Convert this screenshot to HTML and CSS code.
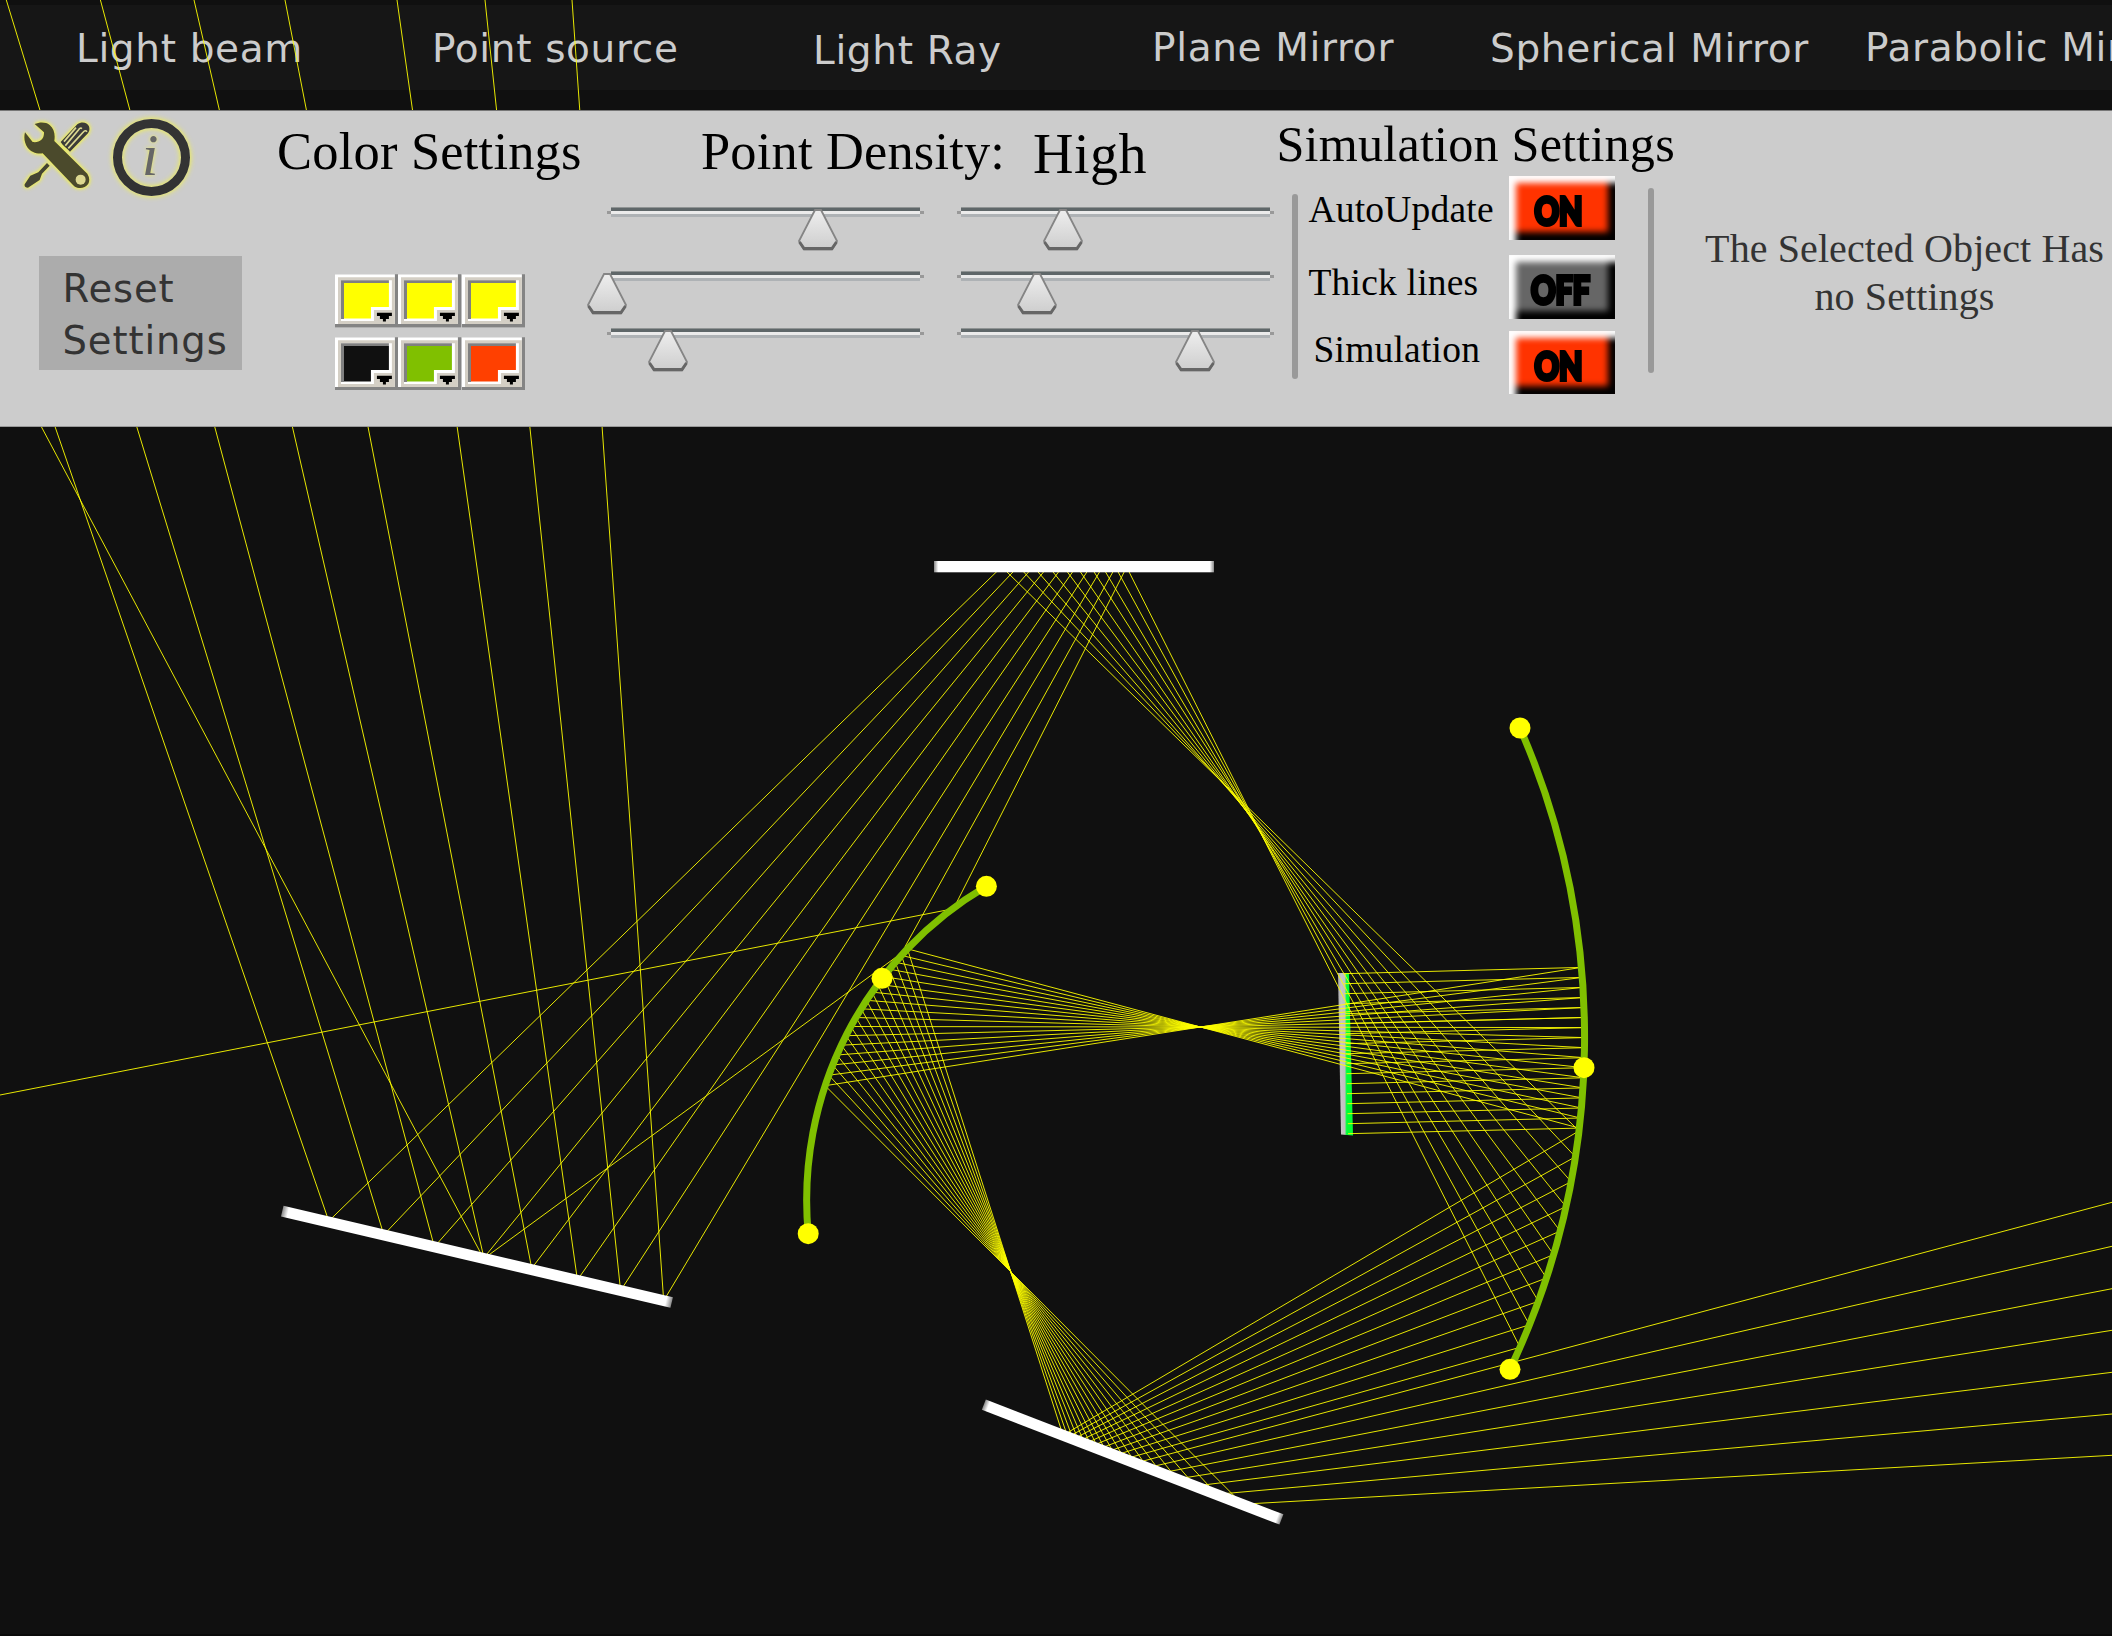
FILE: index.html
```html
<!DOCTYPE html>
<html lang="en">
<head>
<meta charset="utf-8">
<title>Optics simulation</title>
<link rel="stylesheet" href="styles.css">
</head>
<body>
<svg class="defs" width="0" height="0" aria-hidden="true">
  <defs>
    <linearGradient id="thumbFill" x1="0" y1="0" x2="0" y2="1"><stop offset="0" stop-color="#eee"/><stop offset="1" stop-color="#cdcdcd"/></linearGradient>
    <linearGradient id="emitterFill" x1="0" y1="0" x2="1" y2="0"><stop offset="0" stop-color="#aaa"/><stop offset=".2" stop-color="#c6c6c6"/><stop offset=".45" stop-color="#c0c0c0"/><stop offset=".58" stop-color="#00ff33"/><stop offset="1" stop-color="#00ff33"/></linearGradient>
    <linearGradient id="mirrorFill" x1="0" y1="0" x2="1" y2="0"><stop offset="0" stop-color="#888"/><stop offset=".015" stop-color="#fff"/><stop offset=".985" stop-color="#fff"/><stop offset="1" stop-color="#888"/></linearGradient>
    <symbol id="swatch" viewBox="0 0 63.5 53.5">
      <path fill="#848484" d="M0 0h63.5v53.5H0z"/>
      <path fill="#fff" d="M0 0h60v50H0z"/>
      <path fill="#d4cfc5" d="M3 3h57v47H3z"/>
      <path fill="#fff" d="M6 6h51v30H39v11H6z"/>
      <path fill="#808080" d="M6 6h48v3H9v36H6z"/>
      <path fill="currentColor" d="M9 9h45v24H36v11.500H9z"/>
      <path fill="#000" d="M42 38.700h15V42h-3v3h-3v2.500h-3V45h-3v-3h-3z"/>
    </symbol>
    <symbol id="thumb" viewBox="0 0 42 42">
      <path fill="url(#thumbFill)" stroke="#858585" stroke-width="1.800" d="M18 1h6l16 31-5 8.500H7L2 32z"/>
      <path fill="none" stroke="#666" stroke-width="3" d="M2.500 33L7 39.500h28l4.500-6.500"/>
    </symbol>
  </defs>
</svg>
<div class="app">
  <nav class="objects">
    <span class="o1">Light beam</span><span class="o2">Point source</span><span class="o3">Light Ray</span><span class="o4">Plane Mirror</span><span class="o5">Spherical Mirror</span><span class="o6">Parabolic Mirror</span>
  </nav>

  <section class="panel">
    <div class="tools">
      <div class="icons">
        <svg class="wrench" viewBox="60 55 220 220">
          <g fill="#4b4a2c">
            <path d="M182 127L232 74C245 64 262 68 267 80Q271 93 264 101L210 156L203 149L196 143L188 135Z" fill="#3b3b38"/>
            <path d="M196 138L236 90Q241 83 246 87M205 146L250 97Q256 90 261 96M192 126L228 84" stroke="#dcd890" stroke-width="5" fill="none"/>
            <path d="M141 190L149 198L126 222L119 241L84 264Q72 264 74 254L91 228L115 218Z" fill="#444433"/>
            <path d="M104 73C118 67 137 66 149 76C163 88 166 105 163 124L262 222Q272 238 265 252Q252 269 232 264Q224 262 219 256L128 161C111 164 93 157 83 144C73 130 71 113 75 98L98 127C118 130 133 119 132 98Z"/>
          </g>
          <circle cx="242" cy="240" r="15" fill="#dcd890"/>
        </svg>
        <div class="info">i</div>
      </div>
      <button class="reset">Reset<br>Settings</button>
    </div>

    <div class="colors">
      <h2>Color Settings</h2>
      <div class="swatches">
        <svg class="yellow"><use href="#swatch"/></svg><svg class="yellow"><use href="#swatch"/></svg><svg class="yellow"><use href="#swatch"/></svg>
        <svg class="black"><use href="#swatch"/></svg><svg class="green"><use href="#swatch"/></svg><svg class="orange"><use href="#swatch"/></svg>
      </div>
    </div>

    <div class="density">
      <div class="heading"><h2>Point Density:</h2><strong>High</strong></div>
      <div class="sliders">
        <div class="slider"><svg style="left:66.600%"><use href="#thumb"/></svg></div>
        <div class="slider"><svg style="left:33.300%"><use href="#thumb"/></svg></div>
        <div class="slider"><svg style="left:0%"><use href="#thumb"/></svg></div>
        <div class="slider"><svg style="left:25.100%"><use href="#thumb"/></svg></div>
        <div class="slider"><svg style="left:19.200%"><use href="#thumb"/></svg></div>
        <div class="slider"><svg style="left:75.100%"><use href="#thumb"/></svg></div>
      </div>
    </div>

    <div class="simulation">
      <h2>Simulation Settings</h2>
      <div class="switches">
        <div class="labels"><span>AutoUpdate</span><span>Thick lines</span><span>Simulation</span></div>
        <div class="toggles"><button class="on"><span>ON</span></button><button class="off"><span>OFF</span></button><button class="on"><span>ON</span></button></div>
      </div>
    </div>

    <div class="object">The Selected Object Has<br>no Settings</div>
  </section>

  <svg class="scene" viewBox="0 0 2112 1636">
    <g id="emitter"><path fill="url(#emitterFill)" d="M1338 973h11l4 162.500-12-1z"/></g>
    <g id="rays"></g>
    <g class="planes">
      <rect fill="url(#mirrorFill)" x="934" y="561" width="280" height="11.300"/>
      <rect fill="url(#mirrorFill)" width="400" height="11" transform="translate(283.500 1205.800) rotate(13.200)"/>
      <rect fill="url(#mirrorFill)" width="319" height="11" transform="translate(985.800 1399.500) rotate(21.100)"/>
    </g>
    <g class="curves">
      <path d="M1520 728A775 775 0 0 1 1510 1369.300"/>
      <path d="M986.400 886.300A364 364 0 0 0 808.200 1233.700"/>
    </g>
    <g class="handles">
      <circle cx="1520" cy="728" r="10.500"/><circle cx="1584" cy="1067.700" r="10.500"/><circle cx="1510" cy="1369.300" r="10.500"/>
      <circle cx="986.400" cy="886.300" r="10.500"/><circle cx="882" cy="978.300" r="10.500"/><circle cx="808.200" cy="1233.700" r="10.500"/>
    </g>
  </svg>
</div>
<script src="rays.js"></script>
</body>
</html>
```
FILE: styles.css
```css
* { box-sizing: border-box; }
body { margin: 0; background: #101010; }
.defs { position: absolute; }
h2 { margin: 0; font-weight: 400; }
button { border: 0; padding: 0; margin: 0; }

.app {
  position: relative;
  width: 2112px;
  height: 1636px;
  overflow: hidden;
  background: #101010;
  border-bottom: 2px solid #0a0a0a;
}

.objects {
  display: flex;
  margin-top: 5px;
  height: 85px;
  background: #161616;
  color: #ccc;
  font: 39px/60px "DejaVu Sans", Verdana, sans-serif;
  letter-spacing: .65px;
  white-space: nowrap;
}
.objects span { flex: none; padding-top: 13.5px; }
.o1 { width: 356px; margin-left: 76px; }
.o2 { width: 381px; }
.objects .o3 { width: 339px; padding-top: 16px; }
.objects .o4 { width: 338px; padding-top: 13px; }
.o5 { width: 375px; }
.objects .o6 { padding-top: 12.5px; }

.panel {
  position: relative;
  z-index: 2;
  display: flex;
  margin-top: 20px;
  height: 317px;
  background: #ccc;
  border-top: 1px solid #777;
  border-bottom: 1px solid #999;
  font-family: "Liberation Serif", "Times New Roman", serif;
  letter-spacing: .2px;
  color: #000;
  white-space: nowrap;
}

.tools { width: 277px; flex: none; }
.icons { display: flex; height: 145px; padding: 7px 0 0 20px; }
.wrench { width: 73.3px; height: 73.3px; filter: drop-shadow(0 0 2px #ee5) drop-shadow(0 0 1px #ee5); overflow: visible; }
.info {
  width: 77px;
  height: 77px;
  margin: 1px 0 0 20px;
  padding-right: 3px;
  border: 9.3px solid #333;
  border-radius: 50%;
  box-shadow: 0 0 5px 1px #ee5, inset 0 0 5px 1px #ee5;
  color: #666;
  font: italic 60px/54px "Liberation Serif", serif;
  text-align: center;
  text-shadow: 0 0 4px #ee5;
}
.reset {
  width: 203px;
  height: 113.5px;
  margin-left: 38.5px;
  padding: 5px 0 0 24px;
  background: #acacac;
  color: #333;
  font: 38.5px/52.7px "DejaVu Sans", Verdana, sans-serif;
  letter-spacing: .9px;
  text-align: left;
}

.colors { width: 330px; flex: none; padding-top: 10px; }
.colors h2 { font-size: 52.5px; line-height: 60px; }
.swatches { display: grid; grid-template-columns: repeat(3, 63.4px); gap: 9px 0; margin: 93px 0 0 58px; }
.swatches svg { display: block; width: 63.4px; height: 53.7px; }
.yellow { color: #ff0; }
.black { color: #101010; }
.green { color: #80c000; }
.orange { color: #ff4000; }

.density { width: 684px; flex: none; padding-top: 10px; }
.heading { display: flex; height: 86px; padding-left: 94px; font-size: 52.4px; line-height: 60px; }
.heading h2 { width: 332px; font-size: inherit; }
.heading strong { font-weight: 400; font-size: 56px; line-height: 66px; letter-spacing: .5px; }
.sliders { display: grid; grid-template-columns: 317px 317px; grid-template-rows: 63.5px 57.5px 40px; column-gap: 33px; }
.slider {
  position: relative;
  height: 10px;
  background:
    linear-gradient(#909494 1px, #5f6769 1px, #5f6769 4px, #ebebeb 4px, #ebebeb 7px, #aeb2b5 7px) 4px 0 / 309px 10px no-repeat,
    linear-gradient(#999, #999) 0 4px / 317px 3px no-repeat;
}
.slider svg { position: absolute; top: 2.3px; width: 42px; height: 42px; margin-left: -21px; }

.simulation { width: 362px; flex: none; padding-top: 4px; }
.simulation h2 { margin-left: -14.5px; font-size: 50.2px; line-height: 58px; }
.switches { display: flex; margin-top: 3px; }
.switches > *, .switches::before, .switches::after { flex: none; }
.switches::before { content: ""; width: 5.5px; height: 185px; margin: 18px 0 0 1px; border-radius: 3px; background: #999; }
.switches::after { content: ""; width: 6px; height: 185px; margin: 12px 0 0 33.5px; border-radius: 3px; background: #999; }
.labels { display: flex; flex-direction: column; width: 211px; padding: 14px 0 0 11px; font-size: 37.5px; line-height: 40px; }
.labels span + span { margin-top: 32.5px; }
.labels span:last-child { margin: 27px 0 0 5px; }
.toggles { display: flex; flex-direction: column; }
.toggles button {
  width: 106px;
  height: 63.5px;
  margin-bottom: 15.5px;
  color: #000;
  font: 900 38px/60px Lato, sans-serif;
  letter-spacing: 0;
  -webkit-text-stroke: 4px #000;
  box-shadow: inset 7px 7px 6px #fff, inset -7px -8px 6px #000;
}
.toggles span { display: block; padding-top: 4px; transform: scaleX(.8); }
.toggles .on { background: #f30; padding-right: 7px; }
.toggles .off { background: #666; margin-bottom: 12px; padding-right: 3px; }

.object { width: 512px; flex: none; margin-left: -4.5px; padding-top: 113.5px; color: #333; text-align: center; font-size: 40px; line-height: 48px; letter-spacing: .1px; }

.scene { position: absolute; z-index: 1; left: 0; top: 0; width: 2112px; height: 1636px; pointer-events: none; }
#rays { stroke: #ff0; stroke-width: .9; fill: none; }
.curves { stroke: #80c000; stroke-width: 7; fill: none; }
.handles { fill: #ff0; }
```
FILE: rays.js
```javascript
const rays = document.getElementById('rays');
const right = { x: 809.6, y: 1037.6, r: 775 };
const left = { x: 1170.7, y: 1200.2, r: 364 };

function draw(...pts) {
  const p = document.createElementNS('http://www.w3.org/2000/svg', 'path');
  p.setAttribute('d', 'M' + pts.map(q => q.map(v => v.toFixed(1)).join(' ')).join('L'));
  rays.appendChild(p);
}

// Intersection of the line a-b with a circle; side picks the far (+1) or near (-1) root
function hitCircle(a, b, c, side) {
  const dx = b[0] - a[0], dy = b[1] - a[1];
  const fx = a[0] - c.x, fy = a[1] - c.y;
  const A = dx * dx + dy * dy, B = fx * dx + fy * dy;
  const t = (-B + side * Math.sqrt(B * B - A * (fx * fx + fy * fy - c.r * c.r))) / A;
  return [a[0] + t * dx, a[1] + t * dy];
}

// Intersection of the lines a-b and c-d
function hitLine(a, b, c, d) {
  const dx = b[0] - a[0], dy = b[1] - a[1], ex = d[0] - c[0], ey = d[1] - c[1];
  const t = ((c[0] - a[0]) * ey - (c[1] - a[1]) * ex) / (dx * ey - dy * ex);
  return [a[0] + t * dx, a[1] + t * dy];
}

const bottomMirror = [[984, 1405], [1282, 1519.3]];
const topMirror = [[934, 567], [1214, 567]];
const leftMirror = [[282.5, 1211.3], [671.5, 1302.5]];
const fan = [78, 124, 168, 212, 255, 297, 339, 381, 424, 466, 502, 547, 591, 634, 679, 721, 767];
const edge = [1202.3, 1246.3, 1288.7, 1330.3, 1372.3, 1414, 1455.3];
const topIn = [1007.3, 1024, 1038.3, 1053.3, 1067.7, 1080.7, 1094.3, 1105.7, 1118.3, 1129.3];
const topOut = [996, 1012.7, 1028.3, 1043.3, 1058.3, 1072.3, 1086.7, 1099.3, 1112.7, 1124];
const down = [[333.3, 1216.7], [388.3, 1230], [438.3, 1242.3], [487, 1254], [535, 1264], [580.7, 1275.3], [624, 1285.3], [666.7, 1295.7], [905, 946.7], [953.5, 908.7]];
const up = [[326.7, 1215], [382, 1229], [432.7, 1240.7], [482.7, 1252.3], [530.7, 1263.3], [576.7, 1275], [620, 1285], [663.3, 1295.3]];
const ceiling = [-92, 6.3, 100.4, 194, 285, 397, 485, 572];

for (let i = 0; i < 17; i++) {
  // The beam flips over at the first focus, so the lowest ray leads the fan
  const n = 16 - i;
  const s = [1344 + n * 0.25, 973.7 + n * 10];
  const q = hitCircle(s, [1578, 967.5 + n * 10.04], right, 1);
  const p = hitCircle(q, [1200.4, 1027], left, -1 + 2 * (q[0] > 1200));
  const b = hitLine(p, [1010.7, 1271.7], ...bottomMirror);
  draw(s, q, p, b);
  if (i >= 10) {
    draw(b, [2112, edge[i - 10]]);
    continue;
  }
  const r = hitCircle(b, [1350, 1240 + fan[i] / 3], right, 1);
  const t = hitLine(r, [topIn[i], 572.3], ...topMirror);
  draw(b, r, t);
  const o = hitLine([topOut[i], 572.3], down[i], ...topMirror);
  if (i < 8) {
    const l = hitLine(o, down[i], ...leftMirror);
    draw(o, l);
    draw(hitLine(up[i], [ceiling[i], 0], ...leftMirror), [ceiling[i], 0]);
  } else {
    draw(o, down[i]);
  }
}
draw([905, 948], [903, 952], [486, 1257]);
draw([482, 1256], [480, 1251.7], [41.5, 427], [-50, 255]);
draw([953.5, 908.7], [780, 942.7], [0, 1095]);
```
